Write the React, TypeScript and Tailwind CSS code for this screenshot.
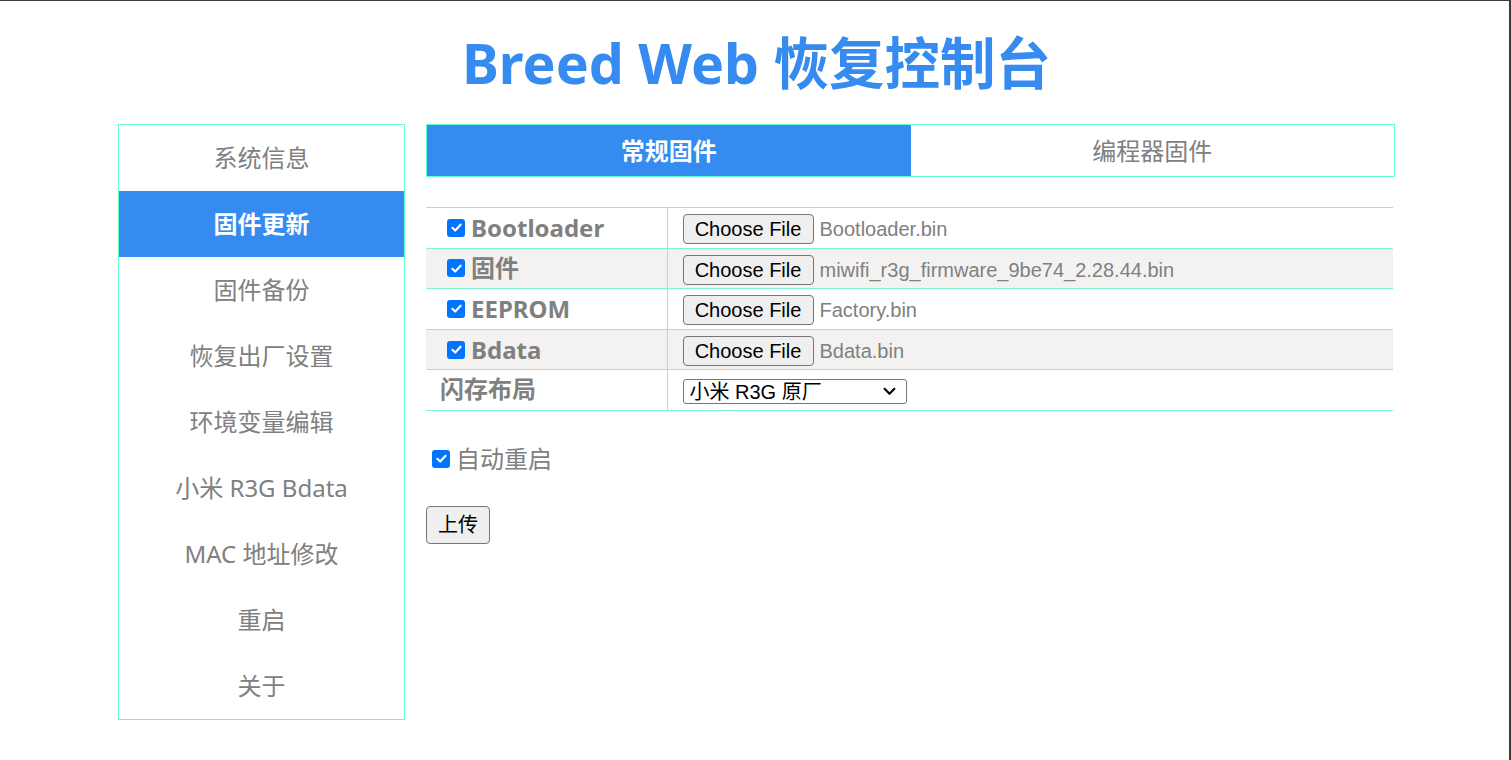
import { useState } from 'react';

const navItems = ['系统信息', '固件更新', '固件备份', '恢复出厂设置', '环境变量编辑', '小米 R3G Bdata', 'MAC 地址修改', '重启', '关于'];

interface FirmwareRow {
  label: string;
  file: string;
  checkable: boolean;
}

const rows: FirmwareRow[] = [
  { label: 'Bootloader', file: 'Bootloader.bin', checkable: true },
  { label: '固件', file: 'miwifi_r3g_firmware_9be74_2.28.44.bin', checkable: true },
  { label: 'EEPROM', file: 'Factory.bin', checkable: true },
  { label: 'Bdata', file: 'Bdata.bin', checkable: true },
];

const cjk = { fontFamily: '"Noto Sans", "Noto Sans CJK SC", sans-serif' };
const ctrl = { fontFamily: '"Liberation Sans", "Noto Sans CJK SC", sans-serif' };

function Check({ className = '' }: { className?: string }) {
  return (
    <span className={`inline-flex h-[18px] w-[18px] items-center justify-center rounded-[3px] bg-[#0075ff] ${className}`}>
      <svg viewBox="0 0 12 12" className="h-[13px] w-[13px]">
        <path d="M2.2 6.3 L4.8 8.8 L9.8 3.4" fill="none" stroke="white" strokeWidth="2" strokeLinecap="round" strokeLinejoin="round" />
      </svg>
    </span>
  );
}

function NativeButton({ children, className = '' }: { children: React.ReactNode; className?: string }) {
  return (
    <button
      type="button"
      style={ctrl}
      className={`rounded-[4px] border border-[#767676] bg-[#efefef] text-[20px] leading-none text-black ${className}`}
    >
      {children}
    </button>
  );
}

export default function App() {
  const [active, setActive] = useState(1);
  const [tab, setTab] = useState(0);

  return (
    <div style={cjk} className="min-h-[760px] border-t border-r-2 border-[#3a3a3a] bg-white pl-[4px] text-[#808080]">
      {/* Header */}
      <div className="flex h-[123px] items-center justify-center">
        <h1 className="text-[55.5px] font-bold leading-none text-[#358bf0]">Breed Web 恢复控制台</h1>
      </div>

      <div className="mx-auto flex w-[1277px] items-start gap-[21px]">
        {/* Sidebar */}
        <ul className="w-[287px] shrink-0 border border-[#66ffcc]">
          {navItems.map((item, i) => (
            <li
              key={item}
              onClick={() => setActive(i)}
              className={`flex h-[66px] cursor-pointer items-center justify-center text-[24px] ${
                active === i ? 'bg-[#358bf0] font-bold text-white' : 'text-[#808080]'
              }`}
            >
              {item}
            </li>
          ))}
        </ul>

        {/* Main */}
        <div className="w-[969px]">
          <div className="flex h-[53px] border border-[#66ffcc]">
            {['常规固件', '编程器固件'].map((t, i) => (
              <div
                key={t}
                onClick={() => setTab(i)}
                className={`flex flex-1 cursor-pointer items-center justify-center text-[24px] ${
                  tab === i ? 'bg-[#358bf0] font-bold text-white' : 'text-[#808080]'
                }`}
              >
                {t}
              </div>
            ))}
          </div>

          <table className="mt-[30px] w-[967px] border-collapse">
            <tbody>
              {rows.map((r, i) => (
                <tr key={r.label} className={`h-[40.6px] border-y border-[#7ef5cf] ${i % 2 === 1 ? 'bg-[#f3f2f1]' : ''}`}>
                  <td className="w-[241px] border-r border-[#7ef5cf] pl-[21px]">
                    <div className="flex items-center gap-[6px]">
                      {r.checkable && <Check />}
                      <span className="text-[24px] font-bold leading-none text-[#808080]">{r.label}</span>
                    </div>
                  </td>
                  <td className="pl-[15px] pt-[3px]">
                    <div className="flex items-center gap-[6px]">
                      <NativeButton className="h-[30px] w-[131px]">Choose File</NativeButton>
                      <span style={ctrl} className="text-[20px] text-[#808080]">{r.file}</span>
                    </div>
                  </td>
                </tr>
              ))}
              <tr className="h-[40.6px] border-y border-[#7ef5cf]">
                <td className="w-[241px] border-r border-[#7ef5cf] pl-[14px]">
                  <span className="text-[24px] font-bold leading-none text-[#808080]">闪存布局</span>
                </td>
                <td className="pl-[15px] pt-[3px]">
                  <div
                    style={ctrl}
                    className="flex h-[25px] w-[224px] items-center justify-between rounded-[3px] border border-[#767676] bg-white pl-[6px] pr-[10px] text-[20px] leading-none text-black"
                  >
                    <span>小米 R3G 原厂</span>
                    <svg viewBox="0 0 12 8" className="h-[9px] w-[13px]">
                      <path d="M1.5 1.5 L6 6 L10.5 1.5" fill="none" stroke="black" strokeWidth="2" strokeLinecap="round" strokeLinejoin="round" />
                    </svg>
                  </div>
                </td>
              </tr>
            </tbody>
          </table>

          <div className="mt-[36px] flex items-center gap-[6px] pl-[6px]">
            <Check />
            <span className="text-[24px] leading-none text-[#808080]">自动重启</span>
          </div>

          <NativeButton className="mt-[35px] h-[38px] w-[64px]">上传</NativeButton>
        </div>
      </div>
    </div>
  );
}
